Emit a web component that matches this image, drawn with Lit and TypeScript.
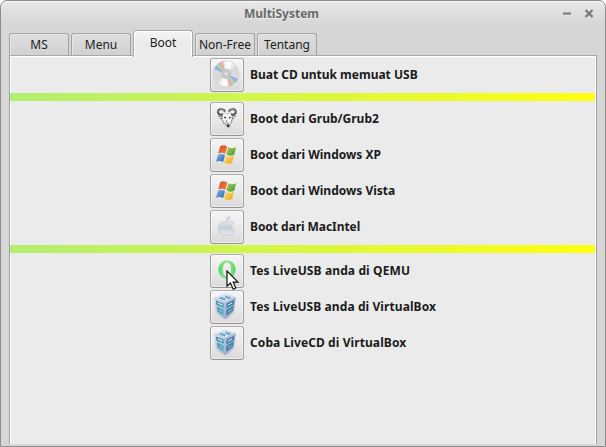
import { LitElement, html, svg, css } from "lit";
import { customElement, property } from "lit/decorators.js";

const disc = svg`
  <defs>
    <linearGradient id="d" x1="0" y1="0" x2="1" y2="1">
      <stop offset="0" stop-color="#c8c8c8"/><stop offset=".5" stop-color="#f0f0f0"/><stop offset="1" stop-color="#c4c4c4"/>
    </linearGradient>
    <clipPath id="c"><circle cx="14" cy="14" r="12.6"/></clipPath>
    <filter id="s"><feGaussianBlur stdDeviation=".5"/></filter>
  </defs>
  <g transform="translate(-.9 -1.1)">
    <circle cx="14" cy="14" r="13" fill="url(#d)" stroke="#c6c6c6" stroke-width=".7"/>
    <g clip-path="url(#c)"><g filter="url(#s)">
      <path d="M14 14 26 2 29 14 27 19Z M14 14 2 27 0 14 1 9Z" fill="#d9d9d9"/>
      <path d="M14 14 12-2 22 0Z M14 14 6 29 16 29Z" fill="#fafafa"/>
      <path d="M14 14 0 8 3 4Z M14 14 28 20 25 24Z" fill="#a2a2ee"/>
      <path d="M14 14 3 5 6 1Z M14 14 25 23 22 27Z" fill="#9ae2a4"/>
      <path d="M14 14 6 2 10 0Z M14 14 22 26 18 28Z" fill="#f2a8a8"/>
    </g></g>
    <circle cx="14" cy="14" r="4.8" fill="#c9c9c9" stroke="#bababa" stroke-width=".6"/>
    <circle cx="14" cy="14" r="2.1" fill="#e6e6e6" stroke="#b5b5b5" stroke-width=".6"/>
  </g>`;

const gnu = svg`
  <path d="M8 9.8 11 7.6 14 9 17.5 7.6 20 10 19 16 17.5 18.5 17 22.3 15.3 23 12 19 9 15.5Z" fill="#f6f6f6" stroke="#999" stroke-width=".5"/>
  <path d="M12 6.6C10.5 3.4 5 3.6 5 7 5 9.8 8 10.2 9.8 9.2M16 6.6C17.5 3.4 22.6 3.6 22.8 7 22.8 9.8 20 10.2 18.2 9.2" fill="none" stroke="#555" stroke-width="2.1"/>
  <path d="M11.6 6.2C10 4 6 4.4 5.6 7M16.5 6.2C18 4 21.8 4.4 22.2 7" fill="none" stroke="#c5c5c5" stroke-width=".9"/>
  <path d="M4.8 11.3C7 10.6 8 10.8 10 12M22.8 11.3C21 10.6 19.8 10.8 18.3 12M6.5 13 9.5 13.6M21.3 13 18.7 14" fill="none" stroke="#555" stroke-width=".9"/>
  <path d="M9 14.5 11 17.5 10.5 19M11.5 18 13.3 20.5M19 15 18 18.5M13 15 14 18.5 16.2 18" fill="none" stroke="#777" stroke-width=".8"/>
  <path d="M13.3 19.7 16.6 19.2 16.3 22 14.7 22.3Z" fill="#222"/>
  <path d="M11.3 12.2 13 13M17.3 12.4 16 13.2" stroke="#222" stroke-width="1.3"/>`;

const flag = svg`
  <defs>
    <linearGradient id="r" x2="1" y2="1"><stop stop-color="#cf4a20"/><stop offset="1" stop-color="#f8844a"/></linearGradient>
    <linearGradient id="g" x2="1" y2="1"><stop stop-color="#a4cf58"/><stop offset="1" stop-color="#4e982b"/></linearGradient>
    <linearGradient id="b" x2="1" y2="1"><stop stop-color="#84b8ec"/><stop offset="1" stop-color="#2a62b4"/></linearGradient>
    <linearGradient id="y" x2="1" y2="1"><stop stop-color="#ffe066"/><stop offset="1" stop-color="#efa21c"/></linearGradient>
  </defs>
  <path d="M7.3 5.1C9.9 3.7 12.4 4 14.2 5.7L12.3 13C10 11.5 7.9 11.3 5.2 12.6Z" fill="url(#r)"/>
  <path d="M15.3 6.2C17.7 7.6 20.4 7.7 23.2 6.2L21.2 13.7C18.6 15.1 15.9 15 13.4 13.6Z" fill="url(#g)"/>
  <path d="M4.9 13.8C7.5 12.5 10 12.7 12 14.2L10.1 21.1C7.8 19.6 5.5 19.5 3 20.8Z" fill="url(#b)"/>
  <path d="M13.1 14.8C15.6 16.2 18.1 16.3 20.9 15L19 22C16.3 23.2 13.6 23.2 11.2 21.7Z" fill="url(#y)"/>`;

const apple = svg`
  <defs><linearGradient id="a" x2="0" y2="1"><stop stop-color="#e6e9ee"/><stop offset=".5" stop-color="#c5ccd5"/><stop offset=".56" stop-color="#d1d7df"/><stop offset="1" stop-color="#e4e8ed"/></linearGradient></defs>
  <path d="M13.8 9.2C15.6 8.4 18.6 7.2 20.9 9.8 17.8 11.6 18 15.9 21.6 17.4 20.4 20.4 18.6 22.6 17 22.6 15.4 22.6 15.1 21.8 13.5 21.8S11.5 22.6 10 22.6C7.4 22.3 5.1 17.7 5.6 13.4 6.1 9.2 9.6 7.4 13.8 9.2Z" fill="url(#a)" stroke="#bcc3cc" stroke-width=".7"/>
  <path d="M13.4 7.4C13.3 5.2 15 3.4 17 3.2 17.2 5.4 15.6 7.3 13.4 7.4Z" fill="#d2d7de" stroke="#bcc3cc" stroke-width=".5"/>`;

const qemu = svg`
  <defs><linearGradient id="q" x2="1"><stop stop-color="#52dc62"/><stop offset=".5" stop-color="#98f08e"/><stop offset="1" stop-color="#52dc62"/></linearGradient></defs>
  <path fill-rule="evenodd" d="M14 3.9C19 3.9 22.3 7.5 22.3 12.5S19 21.2 14 21.2 5.7 17.6 5.7 12.5 9 3.9 14 3.9ZM14 5.1C11 5.1 9.5 8 9.5 12.5S11 20 14 20 18.5 17 18.5 12.5 17 5.1 14 5.1Z" fill="url(#q)" stroke="#4fc95b" stroke-width=".5"/>
  <path d="M14 20.6C16 23.4 20 24 22 21.6" fill="none" stroke="#65d769" stroke-width="1.4"/>`;

const cube = svg`
  <defs>
    <linearGradient id="l" x2="1" y2="1"><stop stop-color="#dfe4f0"/><stop offset="1" stop-color="#a9b4d0"/></linearGradient>
    <linearGradient id="k" x2="1" y2="1"><stop stop-color="#b8c3dc"/><stop offset="1" stop-color="#8f9dc2"/></linearGradient>
    <linearGradient id="t" x2="1" y2="1"><stop stop-color="#3484a6"/><stop offset="1" stop-color="#62b4cc"/></linearGradient>
  </defs>
  <path d="M23 19 13 26.6 5 22 14 24Z" fill="#b8b8c2" opacity=".6"/>
  <path d="M1.5 5.4 12.3 1 22.5 4.6 12.2 9.2Z" fill="#dbe6f0" stroke="#b4c3d8" stroke-width=".5"/>
  <path d="M1.5 5.4 12.2 9.2 12 26 3.3 20Z" fill="url(#l)" stroke="#b0bcd4" stroke-width=".5"/>
  <path d="M22.5 4.6 12.2 9.2 12 26 20.7 18.6Z" fill="url(#k)" stroke="#9aa9c9" stroke-width=".5"/>
  <path d="M5.5 5.2 9 3.7 11 4.5 13.2 2.7 18.5 4.8 15.3 6.2 12.8 5.3 11.8 7.4Z" fill="#5298bd"/>
  <path d="M8.4 5.1 15.8 4.6M11.2 3.2 13.4 6.7" stroke="#dcebf4" stroke-width=".7"/>
  <path d="M3 7.5 10.8 10.5 10.8 15 3.5 12ZM3.7 13.4 10.7 16.5 10.6 22.9 4.7 18.8Z" fill="url(#t)"/>
  <path d="M21.2 6.9 13.7 10.4 13.6 15.2 20.6 11.5ZM20.4 12.9 13.5 16.8 13.4 22.7 19.5 17.8Z" fill="#347a9e"/>
  <path d="M4.8 9.3 9.4 11.3 9.4 12.8 5 10.9ZM19.5 9 15 11.4 15 12.9 19.2 10.6Z" fill="#c7e3ef"/>
  <path d="M5.6 15.6 9.2 17.3 9.1 20.2 6.1 18.1ZM18.9 15.2 15 17.7 14.9 20 18.5 17.3Z" fill="#73b8cf"/>`;

@customElement("boot-row")
class BootRow extends LitElement {
  @property({ attribute: false }) icon: unknown;
  @property() label = "";
  @property({ type: Number }) spacing = 0;
  @property({ type: Boolean }) pointer = false;
  static styles = css`
    :host { display: flex; align-items: center; height: 34px; margin-left: 200px; gap: 6px; }
    button { position: relative; width: 34px; height: 34px; flex: none; box-sizing: border-box; padding: 0; border: 1px solid #a0a0a0; border-color: #adadad #a0a0a0 #929292; border-radius: 3px; background: linear-gradient(#f6f6f6, #e9e9e9 50%, #dadada); box-shadow: inset 0 0 0 1px #fafafa99; display: grid; place-items: center; }
    .icon { width: 28px; height: 28px; display: block; overflow: visible; }
    .label { font: bold 12px/18px "Noto Sans", sans-serif; color: #1b1b1b; white-space: nowrap; }
    .cursor { position: absolute; left: 15px; top: 15px; width: 14px; height: 21px; z-index: 2; }
  `;
  render() {
    return html`<button aria-label=${this.label}>
        <svg class="icon" viewBox="0 0 28 28">${this.icon}</svg>
        ${this.pointer ? html`<svg class="cursor" viewBox="0 0 14 21"><path d="M1 1V16.2L4.5 13 7.2 19.2 9.8 18 7.2 12.1H12Z" fill="#fff" stroke="#111" stroke-width="1.2"/></svg>` : ""}
      </button><span class="label" style="letter-spacing:${this.spacing}px">${this.label}</span>`;
  }
}

@customElement("app-root")
class AppRoot extends LitElement {
  static styles = css`
    :host { display: block; width: 606px; height: 447px; background: #fff; font-family: "Noto Sans", sans-serif; overflow: hidden; }
    .window { box-sizing: border-box; width: 606px; height: 447px; border: 1px solid #8c8c8c; border-radius: 7px 7px 0 0; background: linear-gradient(#e8e8e8, #d6d6d6 24px); box-shadow: inset 0 1px #fafafa; display: flex; flex-direction: column; padding: 0 8px 2px; }
    header { height: 29px; flex: none; display: flex; align-items: center; box-sizing: border-box; padding: 0 3px 4px 0; }
    h1 { flex: 1; margin: 0 0 0 -8px; text-align: center; font: bold 12px/18px "Noto Sans", sans-serif; color: #696969; text-shadow: 0 1px #f2f2f2; }
    .controls { width: 32px; height: 12px; display: block; }
    nav { height: 25px; flex: none; display: flex; align-items: flex-end; gap: 2px; position: relative; z-index: 1; }
    .tab { width: 60px; height: 22px; box-sizing: border-box; border: 1px solid #a2a2a2; border-bottom: 0; border-radius: 3px 3px 0 0; background: linear-gradient(#dedede, #d1d1d1); box-shadow: inset 1px 1px #e8e8e8; font-size: 12px; line-height: 21px; text-align: center; color: #222; white-space: nowrap; }
    .active { height: 27px; margin-bottom: -2px; border-color: #a8a8a8; background: linear-gradient(#f4f4f4, #ebebeb 12px); box-shadow: inset 1px 1px #fff, inset -1px 0 #fff; line-height: 24px; }
    main { flex: 1; min-height: 0; box-sizing: border-box; border: 1px solid #a4a4a4; border-width: 1px 1px 0; background: #ebebeb; box-shadow: inset 1px 1px #fff, inset -1px 0 #fff; display: flex; flex-direction: column; padding-top: 2px; border-top-color: #a8a8a8; }
    .group { display: flex; flex-direction: column; gap: 2px; padding: 1px 0; }
    .group:first-child { padding-top: 0; }
    .bar { height: 8px; margin: 0 1px 0 0; background: linear-gradient(90deg, #b2ee70, #ffff10); }
  `;
  render() {
    return html`<div class="window">
      <header><h1>MultiSystem</h1>
        <svg class="controls" viewBox="0 0 32 12"><path d="M1 5.5H9" stroke="#777" stroke-width="2"/><path d="M23.5 2 30.5 9M30.5 2 23.5 9" stroke="#777" stroke-width="2.2"/></svg>
      </header>
      <nav>${["MS", "Menu", "Boot", "Non-Free", "Tentang"].map(t => html`<div class="tab ${t === "Boot" ? "active" : ""}">${t}</div>`)}</nav>
      <main>
        <div class="group"><boot-row .icon=${disc} label="Buat CD untuk memuat USB"></boot-row></div>
        <div class="bar"></div>
        <div class="group">
          <boot-row .icon=${gnu} label="Boot dari Grub/Grub2"></boot-row>
          <boot-row .icon=${flag} label="Boot dari Windows XP"></boot-row>
          <boot-row .icon=${flag} label="Boot dari Windows Vista"></boot-row>
          <boot-row .icon=${apple} label="Boot dari MacIntel" spacing="-0.06"></boot-row>
        </div>
        <div class="bar"></div>
        <div class="group">
          <boot-row .icon=${qemu} label="Tes LiveUSB anda di QEMU" spacing="0.12" pointer></boot-row>
          <boot-row .icon=${cube} label="Tes LiveUSB anda di VirtualBox" spacing="0.09"></boot-row>
          <boot-row .icon=${cube} label="Coba LiveCD di VirtualBox" spacing="0.09"></boot-row>
        </div>
      </main>
    </div>`;
  }
}
